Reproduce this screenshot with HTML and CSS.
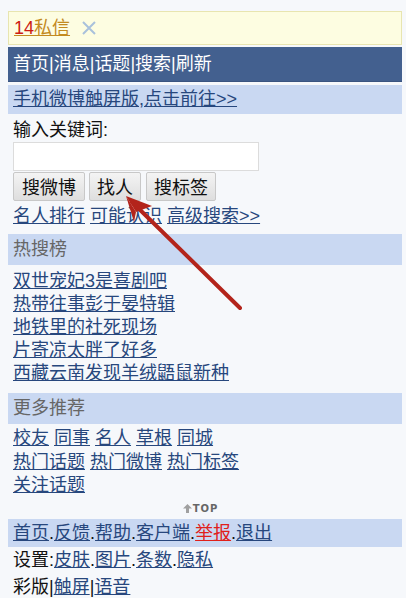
FILE: index.html
```html
<!DOCTYPE html>
<html lang="zh-CN">
<head>
    <meta charset="UTF-8">
    <meta name="viewport" content="width=device-width, initial-scale=1.0">
    <title>搜索 | 微博</title>
    <link rel="stylesheet" href="styles.css">
</head>
<body>

<div class="page">
    <div class="notice">
        <a href="#" class="msg"><span class="num">14</span>私信</a>
        <svg class="close" width="14" height="14" viewBox="0 0 14 14">
            <path d="M1 1L13 13M13 1L1 13" stroke="#a9c1dc" stroke-width="2"/>
        </svg>
    </div>

    <div class="nav">
        <a href="#">首页</a>|<a href="#">消息</a>|<a href="#">话题</a>|<a href="#">搜索</a>|<a href="#">刷新</a>
    </div>

    <div class="bar">
        <a href="#">手机微博触屏版,点击前往&gt;&gt;</a>
    </div>

    <form class="search">
        <div class="label">输入关键词:</div>
        <input type="text" class="keyword">
        <div class="buttons">
            <button type="button">搜微博</button>
            <button type="button">找人</button>
            <button type="button">搜标签</button>
        </div>
    </form>

    <div class="links">
        <a href="#">名人排行</a> <a href="#">可能认识</a> <a href="#">高级搜索&gt;&gt;</a>
    </div>

    <div class="title">热搜榜</div>
    <div class="list">
        <a href="#">双世宠妃3是喜剧吧</a><br>
        <a href="#">热带往事彭于晏特辑</a><br>
        <a href="#">地铁里的社死现场</a><br>
        <a href="#">片寄凉太胖了好多</a><br>
        <a href="#">西藏云南发现羊绒鼯鼠新种</a>
    </div>

    <div class="title">更多推荐</div>
    <div class="list more">
        <a href="#">校友</a> <a href="#">同事</a> <a href="#">名人</a> <a href="#">草根</a> <a href="#">同城</a><br>
        <a href="#">热门话题</a> <a href="#">热门微博</a> <a href="#">热门标签</a><br>
        <a href="#">关注话题</a>
    </div>

    <div class="top">
        <svg width="9" height="9" viewBox="0 0 9 9">
            <path d="M4.5 0L9 4.5H6V9H3V4.5H0Z" fill="#a0a0a0"/>
        </svg>TOP
    </div>

    <div class="bar footer">
        <a href="#">首页</a>.<a href="#">反馈</a>.<a href="#">帮助</a>.<a href="#">客户端</a>.<a href="#" class="red">举报</a>.<a href="#">退出</a>
    </div>

    <div class="line">设置:<a href="#">皮肤</a>.<a href="#">图片</a>.<a href="#">条数</a>.<a href="#">隐私</a></div>
    <div class="line">彩版|<a href="#">触屏</a>|<a href="#">语音</a></div>

    <!-- red arrow drawn on the screenshot -->
    <svg class="arrow" width="406" height="598" viewBox="0 0 406 598">
        <line x1="240" y1="308" x2="132" y2="202" stroke="#b3241b" stroke-width="4" stroke-linecap="round"/>
        <polygon points="126,196 152,206 136,212" fill="#b3241b"/>
        <polygon points="126,196 136,212 134,222" fill="#b3241b"/>
    </svg>
</div>

</body>
</html>
```

FILE: styles.css
```css
body {
    margin: 0;
    padding: 0;
    background-color: #f6f8fb;
    font-family: "Liberation Sans", "Noto Sans CJK SC", sans-serif;
    font-size: 18px;
    color: #111;
}
a {
    color: #27477d;
}
.page {
    position: relative;
    width: 394px;
    height: 598px;
    overflow: hidden;
    padding: 11px 4px 0 8px;
}
.notice {
    height: 32px;
    line-height: 32px;
    background-color: #fdfde1;
    border: 1px solid #e8e5b0;
    padding: 0 5px;
}
.notice .msg {
    color: #c38a1f;
}
.notice .num {
    color: #cc1b12;
}
.notice .close {
    margin-left: 7px;
    vertical-align: -1px;
}
.nav {
    margin-top: 2px;
    height: 35px;
    line-height: 35px;
    background-color: #43608f;
    color: #fff;
    padding: 0 5px;
    border-bottom: 1px solid #3a5480;
    box-sizing: border-box;
}
.nav a {
    color: #fff;
    text-decoration: none;
}
.bar {
    margin-top: 3px;
    height: 29px;
    line-height: 29px;
    background-color: #c9d8f2;
    padding: 0 5px;
}
.search {
    margin: 0;
    padding: 4px 5px 0;
}
.label {
    line-height: 24px;
}
.keyword {
    display: block;
    width: 246px;
    height: 29px;
    box-sizing: border-box;
    border: 1px solid #dcdcdc;
    background-color: #fff;
    margin: 0;
}
.buttons {
    display: flex;
    gap: 4px;
    margin-top: 1px;
}
.buttons button {
    height: 29px;
    padding: 0 8px;
    font-family: "Noto Sans CJK SC", sans-serif;
    font-size: 18px;
    color: #111;
    border: 1px solid #c8c8c8;
    border-radius: 2px;
    background: linear-gradient(#f4f4f4, #dedede);
    line-height: 27px;
}
.buttons button:nth-child(2) {
    padding: 0 7px;
}
.buttons button:nth-child(3) {
    margin-left: 1px;
    padding: 0 7px;
}
.links {
    padding: 2px 5px 0;
    line-height: 26px;
}
.title {
    margin-top: 5px;
    height: 31px;
    line-height: 31px;
    background-color: #c9d8f2;
    color: #666;
    padding: 0 5px;
}
.list {
    padding: 5px 5px 3px;
    line-height: 23px;
}
.more {
    padding-top: 3px;
    line-height: 23.5px;
}
.top {
    text-align: center;
    font-family: "DejaVu Sans", sans-serif;
    font-size: 10px;
    font-weight: bold;
    color: #666;
    line-height: 16px;
    padding-right: 9px;
    letter-spacing: 1px;
}
.top svg {
    margin-right: 1px;
    vertical-align: -1px;
}
.footer {
    margin-top: 2px;
    height: 28px;
    line-height: 28px;
}
.footer .red {
    color: #e0201a;
}
.line {
    padding: 0 5px;
    line-height: 27px;
}
.arrow {
    position: absolute;
    left: 0;
    top: 0;
    pointer-events: none;
}
```
